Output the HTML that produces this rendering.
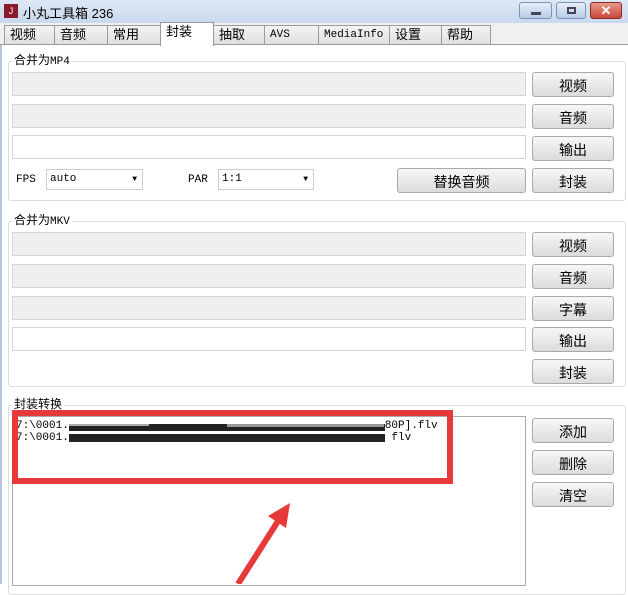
<!DOCTYPE html><html><head><meta charset="utf-8"><style>
*{margin:0;padding:0;box-sizing:border-box}
body{width:628px;height:584px;overflow:hidden;position:relative;background:#fff;font-family:"Liberation Sans","Noto Sans CJK SC",sans-serif;font-size:13px;color:#000}
.a{position:absolute}
.tb{left:0;top:0;width:628px;height:23px;background:linear-gradient(#dde8f5,#c9d9ee)}
.tab{position:absolute;top:25px;height:20px;border:1px solid #9a9a9a;border-bottom:none;background:linear-gradient(#f4f4f4,#dedede);font-size:13px;padding-left:5px;line-height:18px}
.tab.m{font-family:"Liberation Mono",monospace;font-size:11px}
.f{position:absolute;left:12px;width:514px;height:24px;border:1px solid #d4d4d4;background:#efefef}
.f.w{background:#fff}
.b{position:absolute;left:532px;width:82px;height:25px;border:1px solid #a9a9a9;border-radius:3px;background:linear-gradient(#f7f7f7,#dcdcdc);text-align:center;line-height:26px;font-size:14px}
.g{position:absolute;left:8px;width:618px;border:1px solid #dcdcdc;border-radius:3px}
.gl{position:absolute;background:#fff;padding:0 2px;font-size:12px}
.mono{font-family:"Liberation Mono",monospace;font-size:11px}
</style></head><body>
<div class="a tb"></div>
<div class="a" style="left:4px;top:4px;width:14px;height:14px;background:#8b1a2a;color:#fff;font-size:9px;text-align:center;line-height:14px">J</div>
<div class="a" style="left:23px;top:3px;font-size:13px">小丸工具箱 236</div>
<div class="a" style="left:519px;top:2px;width:33px;height:17px;border:1px solid #7d93b5;border-radius:3px;background:linear-gradient(#e6eef8,#b8cbe6)"><div class="a" style="left:11px;top:9px;width:10px;height:3px;background:#445"></div></div>
<div class="a" style="left:556px;top:2px;width:30px;height:17px;border:1px solid #7d93b5;border-radius:3px;background:linear-gradient(#e6eef8,#b8cbe6)"><div class="a" style="left:10px;top:4px;width:9px;height:7px;border:2px solid #445"></div></div>
<div class="a" style="left:590px;top:2px;width:32px;height:17px;border:1px solid #8a2a20;border-radius:3px;background:linear-gradient(#e89a8a,#c8463a);color:#fff;font-weight:bold;text-align:center;line-height:15px;font-size:13px">✕</div>
<div class="a" style="left:0;top:23px;width:628px;height:22px;background:#f0f0f0"></div>
<div class="tab" style="left:4px;width:51px">视频</div>
<div class="tab" style="left:54px;width:54px">音频</div>
<div class="tab" style="left:107px;width:54px">常用</div>
<div class="tab" style="left:160px;top:22px;height:24px;width:54px;background:#fff;z-index:2">封装</div>
<div class="tab" style="left:213px;width:52px">抽取</div>
<div class="tab m" style="left:264px;width:55px">AVS</div>
<div class="tab m" style="left:318px;width:72px">MediaInfo</div>
<div class="tab" style="left:389px;width:53px">设置</div>
<div class="tab" style="left:441px;width:50px">帮助</div>
<div class="a" style="left:0;top:44px;width:628px;height:1px;background:#9a9a9a"></div>
<div class="a" style="left:0;top:45px;width:2px;height:539px;background:#b5c4d8"></div>

<div class="g" style="top:61px;height:140px"></div>
<div class="gl" style="left:12px;top:51px">合并为<span class="mono">MP4</span></div>
<div class="f" style="top:72px"></div><div class="f" style="top:104px"></div><div class="f w" style="top:135px"></div>
<div class="b" style="top:72px">视频</div><div class="b" style="top:104px">音频</div><div class="b" style="top:136px">输出</div><div class="b" style="top:168px">封装</div>
<div class="a mono" style="left:16px;top:174px">FPS</div>
<div class="a mono" style="left:46px;top:169px;width:97px;height:21px;border:1px solid #ccc;padding:3px 3px">auto<span class="a" style="right:5px;top:5px;font-size:8px">▼</span></div>
<div class="a mono" style="left:188px;top:174px">PAR</div>
<div class="a mono" style="left:218px;top:169px;width:96px;height:21px;border:1px solid #ccc;padding:3px 3px">1:1<span class="a" style="right:5px;top:5px;font-size:8px">▼</span></div>
<div class="b" style="top:168px;left:397px;width:129px">替换音频</div>

<div class="g" style="top:221px;height:166px"></div>
<div class="gl" style="left:12px;top:211px">合并为<span class="mono">MKV</span></div>
<div class="f" style="top:232px"></div><div class="f" style="top:264px"></div><div class="f" style="top:296px"></div><div class="f w" style="top:327px"></div>
<div class="b" style="top:232px">视频</div><div class="b" style="top:264px">音频</div><div class="b" style="top:296px">字幕</div><div class="b" style="top:327px">输出</div><div class="b" style="top:359px">封装</div>

<div class="g" style="top:405px;height:190px"></div>
<div class="gl" style="left:12px;top:395px">封装转换</div>
<div class="a" style="left:12px;top:416px;width:514px;height:170px;border:1px solid #aaa;background:#fff"></div>
<div class="a mono" style="left:16px;top:420px;line-height:12px">7:\0001.<span style="display:inline-block;width:316px"></span>80P].flv<br>7:\0001.<span style="display:inline-block;width:316px"></span> flv</div>
<div class="a" style="left:69px;top:424px;width:316px;height:7px;background:#222"></div>
<div class="a" style="left:69px;top:424px;width:80px;height:2px;background:#aaa"></div>
<div class="a" style="left:227px;top:424px;width:157px;height:3px;background:#999"></div>
<div class="a" style="left:69px;top:434px;width:316px;height:8px;background:#222"></div>
<div class="b" style="top:418px">添加</div><div class="b" style="top:450px">删除</div><div class="b" style="top:482px">清空</div>
<div class="a" style="left:12px;top:410px;width:441px;height:74px;border:6px solid #e63a3a"></div>
<svg class="a" style="left:0;top:0" width="628" height="584"><line x1="238" y1="584" x2="280" y2="518" stroke="#e63a3a" stroke-width="6"/><polygon points="290,503 268,516 286,528" fill="#e63a3a"/></svg>
</body></html>
